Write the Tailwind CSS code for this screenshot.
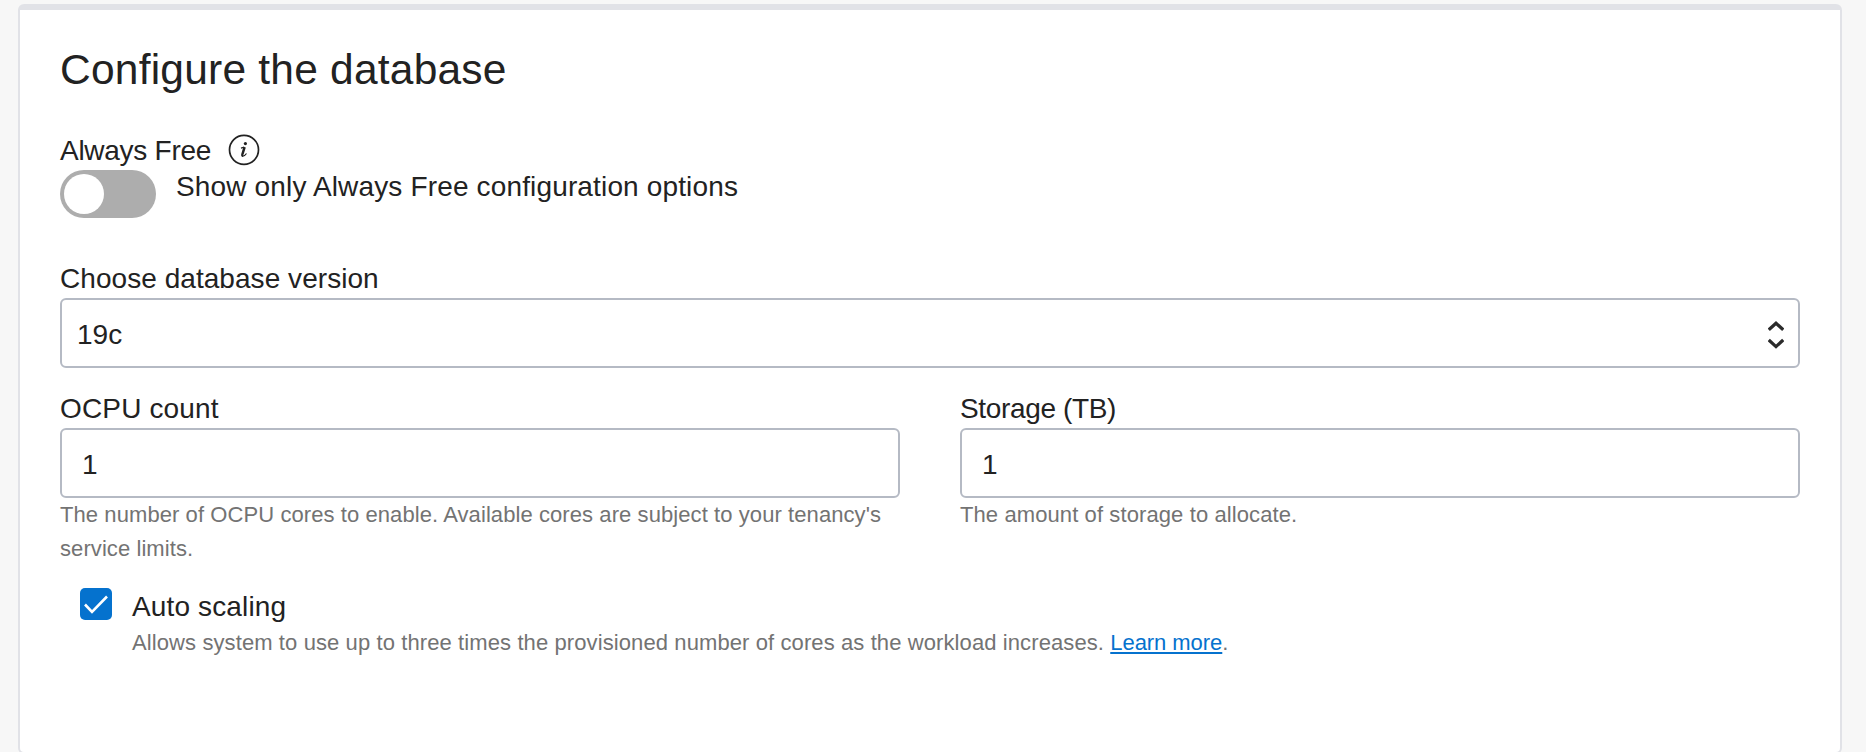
<!DOCTYPE html>
<html lang="en">
<head>
<meta charset="utf-8">
<title>Configure the database</title>
<script src="https://cdn.jsdelivr.net/npm/@tailwindcss/browser@4"></script>
</head>
<body class="h-[752px] overflow-hidden bg-[#f7f7f7] px-[18px] pt-1 pr-6 font-['Liberation_Sans',Arial,sans-serif] text-[28px] text-[#222222]">
<main class="h-[750px] rounded-md border-2 border-t-[6px] border-[#e1e2e7] bg-white px-10 pt-9">
  <h1 class="text-[42.500px] leading-[48px] tracking-[0.22px]">Configure the database</h1>
  <div class="mt-[38px] flex h-9 items-center leading-9">
    <span class="pt-0.5 tracking-[-0.27px]">Always Free</span>
    <svg class="ml-[17px] size-8" viewBox="0 0 32 32" fill="none">
      <circle cx="16" cy="15.800" r="14.500" stroke="#222" stroke-width="1.7"/>
      <circle cx="17.400" cy="9.600" r="1.6" fill="#222"/>
      <path d="M13 14.100l3.200-.9" stroke="#222" stroke-width="1.2"/>
      <path d="M16.600 13.100l-2.100 6.900q-.5 1.900.6 1.800" stroke="#222" stroke-width="2.5"/>
      <path d="M14.600 22.200q2.200-.1 3.900-2.700" stroke="#222" stroke-width="1.2"/>
    </svg>
  </div>
  <div class="mt-0.5 flex h-12 gap-5">
    <div class="h-12 w-24 rounded-full bg-[#adadad] p-1"><div class="size-10 rounded-full bg-white"></div></div>
    <span class="pt-px leading-8 tracking-[0.15px]">Show only Always Free configuration options</span>
  </div>
  <div class="mt-[43px] leading-9 tracking-[0.05px]">Choose database version</div>
  <div class="mt-px flex h-[70px] items-center justify-between rounded-md border-2 border-[#b5bac4] pt-[3px] pr-3.5 pl-[15px]">
    <span>19c</span>
    <svg class="h-8 w-4" viewBox="0 0 16 32" fill="none" stroke="#2b2b2b" stroke-width="3.2"><path d="M.8 10.800l7.200-6.600 7.200 6.600M.8 21l7.200 6.600 7.200-6.600"/></svg>
  </div>
  <div class="mt-[23px] grid grid-cols-2 gap-[60px]">
    <div>
      <div class="leading-9 tracking-[0.15px]">OCPU count</div>
      <div class="mt-px flex h-[70px] items-center rounded-md border-2 border-[#b5bac4] px-5 pt-[3px]">1</div>
      <p class="-mr-4 text-[22px] leading-[34px] tracking-[0.08px] text-[#737373]">The number of OCPU cores to enable. Available cores are subject to your tenancy's<br>service limits.</p>
    </div>
    <div>
      <div class="leading-9 tracking-[-0.35px]">Storage (TB)</div>
      <div class="mt-px flex h-[70px] items-center rounded-md border-2 border-[#b5bac4] px-5 pt-[3px]">1</div>
      <p class="text-[22px] leading-[34px] tracking-[0.1px] text-[#737373]">The amount of storage to allocate.</p>
    </div>
  </div>
  <div class="mt-[22px] flex gap-5 pl-5">
    <svg class="size-8 rounded-[5px] bg-[#0572ce]" viewBox="0 0 32 32" fill="none" stroke="#fff" stroke-width="2.6"><path d="M5 16.500l7 7.300L27 8.500"/></svg>
    <div>
      <div class="pt-px leading-9 tracking-[0.14px]">Auto scaling</div>
      <p class="mt-px text-[22px] leading-[34px] tracking-[0.1px] text-[#737373]">Allows system to use up to three times the provisioned number of cores as the workload increases. <span class="tracking-[-0.05px] text-[#0572ce] underline decoration-2 underline-offset-2">Learn more</span>.</p>
    </div>
  </div>
</main>
</body>
</html>
